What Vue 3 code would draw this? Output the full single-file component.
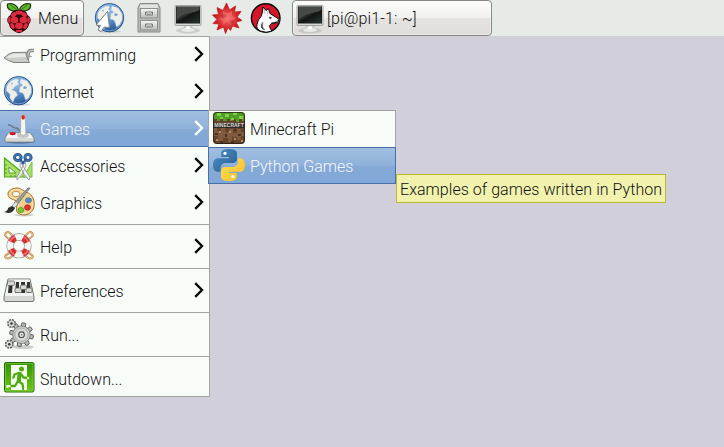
<script setup>
const menu = [
  { label: 'Programming', icon: 'trowel', sub: true },
  { label: 'Internet', icon: 'globe', sub: true },
  { label: 'Games', icon: 'joystick', sub: true, active: true },
  { label: 'Accessories', icon: 'scissors', sub: true },
  { label: 'Graphics', icon: 'palette', sub: true },
  { label: 'Help', icon: 'lifebuoy', sub: true, split: true },
  { label: 'Preferences', icon: 'faders', sub: true, split: true },
  { label: 'Run...', icon: 'gears', split: true },
  { label: 'Shutdown...', icon: 'exit', split: true },
]
const games = [
  { label: 'Minecraft Pi', icon: 'minecraft', logo: 'MINECRAFT' },
  { label: 'Python Games', icon: 'python', active: true },
]
const launchers = ['globe', 'cabinet', 'monitor', 'star', 'wolf']
const turns = [0, 45, 90, 135, 180, 225, 270, 315]
</script>

<template>
  <div class="desktop">
    <svg class="defs" aria-hidden="true">
      <defs>
        <radialGradient id="gBlue" cx=".4" cy=".25" r=".8">
          <stop offset="0" stop-color="#9cc4ea" /><stop offset=".6" stop-color="#4a80bb" /><stop offset="1" stop-color="#1f4d8c" />
        </radialGradient>
        <linearGradient id="gScreen" x1="0" y1="0" x2="1" y2="1">
          <stop offset="0" stop-color="#5c605d" /><stop offset=".4" stop-color="#303432" /><stop offset=".5" stop-color="#101211" /><stop offset="1" stop-color="#30433a" />
        </linearGradient>
        <linearGradient id="gMetal" x1="0" y1="0" x2="0" y2="1">
          <stop offset="0" stop-color="#f7f8f6" /><stop offset="1" stop-color="#babdb8" />
        </linearGradient>
        <radialGradient id="gRed">
          <stop offset="0" stop-color="#f06a68" /><stop offset=".6" stop-color="#d93032" /><stop offset="1" stop-color="#bb0d12" />
        </radialGradient>
        <linearGradient id="gExit" x1="0" y1="0" x2="0" y2="1">
          <stop offset="0" stop-color="#329400" /><stop offset="1" stop-color="#6fc719" />
        </linearGradient>
        <linearGradient id="gPyB" x1="0" y1="0" x2="1" y2="1">
          <stop offset="0" stop-color="#4b91c6" /><stop offset="1" stop-color="#285d8c" />
        </linearGradient>
        <linearGradient id="gPyY" x1="0" y1="0" x2="1" y2="1">
          <stop offset="0" stop-color="#ffe154" /><stop offset="1" stop-color="#f6bc28" />
        </linearGradient>
      </defs>

      <symbol id="raspberry" viewBox="0 0 32 32">
        <path d="M15.500 9C8 10 3.500 7 4.500 2 9 1 15 2.500 15.500 9ZM16.500 9C24 10 28.500 7 27.500 2 23 1 17 2.500 16.500 9Z" fill="#5fb52c" stroke="#1c3a0c" stroke-width="1.200" />
        <path d="M8 3.500 15 8.500M24 3.500 17 8.500" stroke="#2d6914" stroke-width=".8" />
        <path d="M16 8C19.500 7.500 24 9 24.500 13 28.500 15 28.500 20 26 22 25.500 27 20.500 30 16 31.200 11.500 30 6.500 27 6 22 3.500 20 3.500 15 7.500 13 8 9 12.500 7.500 16 8Z" fill="#2a070b" />
        <g fill="#dd2a3e">
          <ellipse cx="16" cy="10.500" rx="3.500" ry="2" /><ellipse cx="10.800" cy="12.700" rx="3.100" ry="2.200" transform="rotate(-35 10.800 12.700)" /><ellipse cx="21.200" cy="12.700" rx="3.100" ry="2.200" transform="rotate(35 21.200 12.700)" />
          <ellipse cx="11.600" cy="18" rx="3.800" ry="3.300" /><ellipse cx="20.400" cy="18" rx="3.800" ry="3.300" /><ellipse cx="16" cy="23.800" rx="3.900" ry="3.200" />
          <ellipse cx="6.400" cy="18" rx="1.300" ry="3.200" /><ellipse cx="25.600" cy="18" rx="1.300" ry="3.200" /><ellipse cx="9.500" cy="24" rx="2" ry="3.200" transform="rotate(-25 9.500 24)" /><ellipse cx="22.500" cy="24" rx="2" ry="3.200" transform="rotate(25 22.500 24)" />
          <ellipse cx="16" cy="29" rx="3.400" ry="1.300" />
        </g>
      </symbol>

      <symbol id="globe" viewBox="0 0 32 32">
        <ellipse cx="16" cy="29.500" rx="11" ry="1.500" fill="#8b9091" opacity=".3" />
        <circle cx="15.500" cy="15.700" r="14.200" fill="url(#gBlue)" stroke="#25518e" stroke-width="1" />
        <circle cx="15.500" cy="15.700" r="13.200" fill="none" stroke="#a9cbe9" stroke-width=".8" opacity=".8" />
        <path d="M4 11C6 7 9 5 13 4L16 5 14 7 16 9 12 11 10 14 8 14.500 13 17 14.500 20 11.500 23 10 27 7 23 7 19 3.500 16ZM18 4 24 6 28 12 28 18 25.500 23 22.500 25 21.500 21 20 18 16.500 17 17 12 20 10 17 8Z" fill="#eeefe9" stroke="#d2dbe0" stroke-width=".5" />
        <path d="M21 11 24 12 23 14 20 13.500ZM8 8 10 8 9 10Z" fill="#76a4cf" />
      </symbol>

      <symbol id="cabinet" viewBox="0 0 32 32">
        <path d="M7 2.500H25L27 7V31H5V7Z" fill="#b7bbb6" stroke="#858a84" />
        <path d="M7.500 3.500H24.500L25.500 7H6.500Z" fill="#e2e4e0" />
        <rect x="7.500" y="7.500" width="17" height="9.500" fill="url(#gMetal)" stroke="#8d918c" />
        <rect x="7.500" y="19.500" width="17" height="9.500" fill="url(#gMetal)" stroke="#8d918c" />
        <path d="M12.500 11H19.500V14H12.500ZM12.500 23H19.500V26H12.500Z" fill="#f6f7f5" stroke="#777b77" />
        <path d="M13 11.500Q16 15 19 11.500M13 23.500Q16 27 19 23.500" fill="none" stroke="#777b77" />
      </symbol>

      <symbol id="monitor" viewBox="0 0 32 32">
        <ellipse cx="16" cy="28.500" rx="12" ry="3" fill="#8d918c" opacity=".3" />
        <path d="M12.500 23H20L21 27H11.500Z" fill="#c6c9c4" />
        <ellipse cx="16" cy="28" rx="7.500" ry="2.500" fill="#e7e9e5" stroke="#bfc3be" stroke-width=".7" />
        <ellipse cx="16" cy="25.500" rx="2.500" ry="1.500" fill="#fff" />
        <rect x="3" y="3.500" width="26" height="20" rx="1" fill="#d6d9d4" stroke="#868b84" stroke-width=".7" />
        <rect x="4" y="4.500" width="24" height="17" fill="#161918" />
        <path d="M4.500 5H27.500V8C22 12 14 9 4.500 18Z" fill="#454a47" />
        <path d="M4.500 18C14 9 22 12 27.500 8V21H4.500Z" fill="url(#gScreen)" opacity=".7" />
      </symbol>

      <symbol id="star" viewBox="0 0 32 32">
        <path d="M15.500 1 18.500 8 24.500 4 23.500 10 30 9.500 26 15 31 18.500 25 20 28 26 21.500 24 19.500 28.500 17 25.500 14.500 31.500 12.500 25 6 28 8 22 2 21.500 6 17.500 1.500 13 7.500 12.500 6 5.500 12 8.500Z" fill="url(#gRed)" stroke="#c51c1e" stroke-width=".8" />
        <path d="M12 9 16 12 21 9 21 14 25 16 21 19 21 23 16 20 12 23 12 19 8 17 12 15Z" fill="#fa8580" opacity=".45" />
        <path d="M8 13 13 12 16 14 12 17ZM18 19 23 18 21 23Z" fill="#9e1014" opacity=".35" />
      </symbol>

      <symbol id="wolf" viewBox="0 0 32 32">
        <circle cx="15.700" cy="16" r="14.300" fill="#d5172a" stroke="#090909" stroke-width="1.400" />
        <path d="M13 5 16 8.500 18.500 6.500 20 11.500 24 14 29.500 17.500Q30 20 27.500 20.500L21.500 21.500Q18.500 23 20 26L22 29Q16 31.500 10.500 29 6 27 7 22.500 7.500 18 11 14.500 12.500 12 13 5Z" fill="#fff" stroke="#090909" stroke-width="1" stroke-linejoin="round" />
        <path d="M14.300 8V12M18 8.500 17.500 12M19 15 22 15.500 20 17ZM28 17.500H29.500V19.500H27.500ZM21 21 27.500 19.500 26 21.500 21 22ZM13 20Q11 25 15 28L12.500 27Q9.500 24 13 20Z" fill="#090909" stroke="#555" stroke-width=".4" />
      </symbol>

      <symbol id="trowel" viewBox="0 0 32 32">
        <path d="M24 23 25.500 14.500Q26 12.500 28 12.500H31" fill="none" stroke="#7e837c" stroke-width="3.500" />
        <path d="M24 23 25.500 14.500Q26 12.500 28 12.500H31" fill="none" stroke="#c7cac4" stroke-width="1.500" />
        <path d="M1 19.800Q6 15 10 14.500L23.500 14.300Q22.500 18 26.500 24.500L11 24.500Q5 23 1 19.800Z" fill="#c8cdc5" stroke="#7d827b" />
        <path d="M3 20Q8 16 12 15.800L22 15.800 23 19Z" fill="#e9ebe6" />
        <path d="M23.500 18 29 18.500" stroke="#9a9e98" />
      </symbol>

      <symbol id="joystick" viewBox="0 0 32 32">
        <ellipse cx="17" cy="29.500" rx="15" ry="2.200" fill="#1d355b" opacity=".35" />
        <path d="M5 13C9 12 9 17 14 16L17 19" fill="none" stroke="#626c78" stroke-width="1.300" />
        <path d="M5 21H27.500L31 26V30H2V26Z" fill="#d8d9d5" stroke="#70736f" stroke-width=".7" />
        <path d="M5.500 21.500H27L30 26H3Z" fill="#f4f4f1" />
        <ellipse cx="20" cy="23.500" rx="6" ry="2.300" fill="#c3c5c2" />
        <path d="M17.800 5Q18 2.300 20 2.300T22.300 5L22.800 22Q20 25 17.500 22Z" fill="#f6f6f3" stroke="#9ba09b" stroke-width=".6" />
        <rect x="18.500" y="3" width="3.300" height="4.500" rx="1.600" fill="#dd2423" />
        <ellipse cx="9.700" cy="21.600" rx="3" ry="1.700" fill="#ba1115" /><ellipse cx="9.700" cy="21" rx="2.500" ry="1.100" fill="#e02b29" />
      </symbol>

      <symbol id="scissors" viewBox="0 0 32 32">
        <path d="M1.500 9V28H25Z" fill="#a8df68" stroke="#52a61c" stroke-width="1.200" />
        <path d="M6 18V24H13Z" fill="#f8fcf9" stroke="#52a61c" />
        <path d="M20 28 29 13 29 28Z" fill="#a8df68" stroke="#78bd45" />
        <path d="M2 24H4M2 20H4M2 16H4M8 28V26M12 28V26M16 28V26" stroke="#387719" stroke-width=".7" />
        <path d="M17.500 12Q20 18 27 28L26 31Q21 27 17 17ZM22 12Q20 18 14 28L14 31Q19 27 23 17Z" fill="#f2f3f0" stroke="#8d938d" stroke-width=".8" />
        <ellipse cx="14.800" cy="8.500" rx="3.300" ry="2.900" fill="none" stroke="#244f88" stroke-width="3" />
        <ellipse cx="25" cy="8.500" rx="3.100" ry="2.900" fill="none" stroke="#244f88" stroke-width="3" />
        <ellipse cx="14.800" cy="8.500" rx="3.300" ry="2.900" fill="none" stroke="#477db9" stroke-width="1.300" />
        <ellipse cx="25" cy="8.500" rx="3.100" ry="2.900" fill="none" stroke="#477db9" stroke-width="1.300" />
        <path d="M17 10 21 15M23 10 19 15" stroke="#2c5c99" stroke-width="2" />
      </symbol>

      <symbol id="palette" viewBox="0 0 32 32">
        <ellipse cx="21" cy="29" rx="10" ry="1.500" fill="#888" opacity=".35" />
        <path d="M11 2.500C16 .5 19 4 23 6C30 8 32 15 31 21C29 29 20 31 15 27C11 24 16 18 13 15C10 13 5 13 5 8C5 5 8 3 11 2.500Z" fill="#eed08d" stroke="#ad7225" />
        <path d="M11 4C16 2 19 6 23 7.500C28 9 30 15 29.500 20C28 27 20 29 16 26C13 22 18 18 14.500 14C11 11 6 12 6.500 8Q7 5 11 4Z" fill="none" stroke="#f9e8bc" />
        <ellipse cx="13" cy="8" rx="4" ry="2.600" fill="#f9fcf9" stroke="#b98231" stroke-width=".8" />
        <ellipse cx="25.500" cy="14.300" rx="3" ry="2.500" fill="#5989c5" stroke="#2c5a99" stroke-width=".6" />
        <ellipse cx="24.500" cy="21.500" rx="3" ry="2.800" fill="#de3230" stroke="#a51316" stroke-width=".6" />
        <ellipse cx="17.800" cy="24" rx="3" ry="2.600" fill="#72c92d" stroke="#418b13" stroke-width=".6" />
        <path d="M27 2 14 19 11 17 25 2Z" fill="#98a0a0" stroke="#5a605e" stroke-width=".7" />
        <path d="M13 15 9 20 11 22 15 18Z" fill="#e2e4e3" stroke="#767c78" stroke-width=".7" />
        <path d="M9 20 12 22Q10 27 5 27L1 26Q5 25 5 22Z" fill="#2c3030" />
      </symbol>

      <symbol id="lifebuoy" viewBox="0 0 32 32">
        <path d="M8 10Q0 6 3 3T10 7M24 10Q32 6 29 3T22 7M8 22Q0 26 3 28T10 25M24 22Q32 26 29 28T22 25" fill="none" stroke="#bd823f" stroke-width="2" />
        <path d="M8 10Q0 6 3 3T10 7M24 10Q32 6 29 3T22 7M8 22Q0 26 3 28T10 25M24 22Q32 26 29 28T22 25" fill="none" stroke="#f4d5a0" stroke-width=".8" />
        <circle cx="16" cy="15.800" r="8.800" fill="none" stroke="#8c928f" stroke-width="7.400" />
        <circle cx="16" cy="15.800" r="8.800" fill="none" stroke="#f3f4f2" stroke-width="6.200" />
        <circle cx="16" cy="15.800" r="8.800" fill="none" stroke="#dd2b2b" stroke-width="6.200" stroke-dasharray="6.400 7.423" stroke-dashoffset="-3.700" />
        <circle cx="16" cy="15.800" r="10" fill="none" stroke="#fff" stroke-width="1.500" opacity=".35" />
      </symbol>

      <symbol id="faders" viewBox="0 0 32 32">
        <path d="M5 5H27L31 23V26Q31 27.500 29 27.500H3Q1 27.500 1 26V23Z" fill="#d5d7d2" stroke="#737771" />
        <path d="M5.500 5.500H26.500L30 22H2Z" fill="#f2f3f0" />
        <path d="M6 8H10L9 19H5ZM13 8H16V19H12ZM18 8H22V19H18ZM24 8H27L28 19H24Z" fill="#30342f" />
        <g fill="#d6d8d2" stroke="#62665f" stroke-width=".8">
          <rect x="4.500" y="7" width="7" height="4.500" rx="1" /><rect x="12" y="14" width="6.500" height="4.500" rx="1" /><rect x="17.500" y="11" width="6" height="4.500" rx="1" /><rect x="23" y="14" width="6" height="4.500" rx="1" />
        </g>
      </symbol>

      <symbol id="gears" viewBox="0 0 32 32">
        <ellipse cx="20" cy="29" rx="11" ry="2" fill="#777" opacity=".35" />
        <g fill="#b9bdb8" stroke="#565b56" stroke-width=".9">
          <rect v-for="t in turns" :key="t" x="16.500" y="4.800" width="4" height="6" rx=".7" :transform="`rotate(${t + 12} 18.500 16.700)`" />
        </g>
        <circle cx="18.500" cy="16.700" r="8.800" fill="#c6cac5" stroke="#656a65" stroke-width=".7" />
        <circle cx="18.500" cy="16.700" r="6.500" fill="#d9dbd7" stroke="#9da19c" stroke-width=".7" />
        <circle cx="18.500" cy="16.700" r="2.800" fill="#f9fbf8" stroke="#474c48" stroke-width="1.200" />
        <circle cx="18.500" cy="16.700" r="1" fill="#7b807b" />
        <g fill="#d7dad5" stroke="#5b605b" stroke-width="1.500">
          <circle cx="8.500" cy="5.500" r="3.700" stroke-dasharray="2 .9" /><circle cx="6.300" cy="26.200" r="3.700" stroke-dasharray="2 .9" />
        </g>
        <circle cx="8.500" cy="5.500" r="1.300" fill="#353a35" /><circle cx="6.300" cy="26.200" r="1.300" fill="#353a35" />
      </symbol>

      <symbol id="exit" viewBox="0 0 32 32">
        <rect x="1.500" y=".5" width="29.500" height="29.500" rx="1.500" fill="url(#gExit)" stroke="#286c08" />
        <rect x="2.500" y="1.500" width="27.500" height="27.500" rx="1" fill="none" stroke="#86cf48" stroke-width=".7" />
        <path d="M8 3H24V28H8Z" fill="#f4fbef" />
        <circle cx="18.500" cy="7" r="2.500" fill="#4fab13" />
        <path d="M15.500 11 11.500 12.500 10 16.500M18 12 20.500 15.500 24 16M16 13 15 19 19.500 22 20.500 28M15 19 12 24 6 24" fill="none" stroke="#4fab13" stroke-width="2.300" stroke-linejoin="round" />
        <path d="M15 10H18.500L18 20 13.800 19Z" fill="#4fab13" />
        <path d="M24.300 15.700 26 16.500M7.500 24H4.500V26M21 27H24" fill="none" stroke="#f4fbef" stroke-width="2" />
      </symbol>

      <symbol id="minecraft" viewBox="0 0 32 32">
        <rect width="32" height="32" rx="4" fill="#65432b" />
        <path d="M0 16H4V19H8V16H12V20H16V17H20V21H24V17H28V20H32V24H28V28H24V25H19V30H15V26H10V29H5V24H0Z" fill="#805a3d" />
        <path d="M2 21H5V23H2ZM12 22H14V25H12ZM25 22H28V24H25ZM18 29H21V32H18ZM7 29H10V32H7ZM21 17H23V19H21Z" fill="#463020" />
        <path d="M6 19H8V21H6ZM16 19H18V21H16ZM28 28H30V30H28ZM3 27H5V29H3ZM21 26H23V28H21Z" fill="#b18b66" />
        <path d="M4 0H28Q32 0 32 4V9H29V7H26V10H23V7H20V9H17V7H14V9H10V6H7V9H4V7H0V4Q0 0 4 0Z" fill="#4c9e26" />
        <path d="M4 1H8V4H4ZM12 2H16V5H12ZM20 0H24V3H20ZM26 4H30V7H26ZM7 5H10V7H7ZM18 6H21V8H18Z" fill="#82d243" />
        <path d="M1 11H31V16H1Z" fill="#302c29" />
        <rect x=".5" y=".5" width="31" height="31" rx="3.500" fill="none" stroke="#29201a" stroke-width=".8" />
      </symbol>

      <symbol id="python" viewBox="0 0 32 32">
        <path d="M15.800 0C11 0 8.200 1.200 8.200 4V8H16V9.200H5C1.800 9.200 0 12 0 16S1.800 22.800 5 22.800H7.500V19C7.500 16 10 14 12.500 14H20C22.500 14 24 12 24 10V4C24 1.500 21 0 15.800 0Z" fill="url(#gPyB)" />
        <path d="M16.200 32C21 32 23.800 30.800 23.800 28V24H16V22.800H27C30.200 22.800 32 20 32 16S30.200 9.200 27 9.200H25V13C25 16 22 18 19.500 18H12C9.500 18 8 20 8 22V28C8 30.500 11 32 16.200 32Z" fill="url(#gPyY)" />
        <circle cx="12" cy="4.300" r="1.600" fill="#fff" /><circle cx="20" cy="27.700" r="1.600" fill="#fff" />
      </symbol>
    </svg>

    <header class="panel">
      <button class="menu-button">
        <svg class="icon"><use href="#raspberry" /></svg>
        <span>Menu</span>
      </button>
      <nav class="launchers">
        <svg v-for="name in launchers" :key="name" class="icon"><use :href="'#' + name" /></svg>
      </nav>
      <button class="task">
        <svg class="icon"><use href="#monitor" /></svg>
        <span>[pi@pi1-1: ~]</span>
      </button>
    </header>

    <ul class="menu main-menu">
      <template v-for="item in menu" :key="item.label">
        <li v-if="item.split" class="separator"></li>
        <li class="item" :class="{ active: item.active }">
          <svg class="icon"><use :href="'#' + item.icon" /></svg>
          <span>{{ item.label }}</span>
          <svg v-if="item.sub" class="arrow" viewBox="0 0 10 16"><path d="M1.200 1.200 8 8 1.200 14.800" /></svg>
        </li>
      </template>
    </ul>

    <ul class="menu sub-menu">
      <li v-for="item in games" :key="item.label" class="item" :class="{ active: item.active }">
        <svg class="icon"><use :href="'#' + item.icon" /></svg>
        <b v-if="item.logo" class="logo">{{ item.logo }}</b>
        <span>{{ item.label }}</span>
      </li>
    </ul>

    <div class="tooltip">Examples of games written in Python</div>

    <svg class="cursor" viewBox="0 0 18 24">
      <path d="M13.500 1.500 15.500 17.500 10 17 7 21.500 4 20 6.500 15.500 2 15Z" />
    </svg>
  </div>
</template>

<style>
body {
  background: #d0cfda;
}
</style>

<style scoped>
.desktop {
  position: relative;
  width: 724px;
  height: 447px;
  overflow: hidden;
  background: #d0cfda;
  color: #111;
  font: 300 16px/20px Roboto, sans-serif;
}
.defs {
  position: absolute;
  width: 0;
  height: 0;
}
.icon {
  display: block;
  flex: none;
  width: 32px;
  height: 32px;
}
.logo {
  position: absolute;
  left: 6px;
  top: 12px;
  width: 30px;
  color: #dedbd5;
  font: 700 5px/7px "Liberation Sans", sans-serif;
  text-align: center;
}
.panel {
  display: flex;
  height: 36px;
  background: #e6ebe7;
}
button {
  display: flex;
  box-sizing: border-box;
  height: 36px;
  margin: 0;
  padding: 0;
  border: 1px solid #8b8784;
  border-radius: 4px;
  background: linear-gradient(#fcfcfb, #f0f0ee 50%, #e5e4e2 51%, #dfdddb);
  box-shadow: inset 0 0 0 1px #ffffff66;
  color: inherit;
  font: inherit;
}
.menu-button {
  width: 84px;
  padding: 1px 0 0 2px;
}
.menu-button span {
  margin-left: 3px;
  line-height: 33px;
  letter-spacing: 0.2px;
}
.launchers {
  display: flex;
  gap: 7px;
  padding: 2px 10px;
}
.launchers .icon:nth-child(2) {
  margin-top: -1px;
}
.task {
  width: 200px;
  padding: 1px 0 0 1px;
}
.task span {
  margin-left: 1px;
  line-height: 33px;
  letter-spacing: 0.15px;
}
.menu {
  position: absolute;
  margin: 0;
  padding: 0;
  list-style: none;
  background: #f8fcf9;
}
.main-menu {
  left: 0;
  top: 36px;
  width: 210px;
  box-shadow: inset -1px 1px #a3a3a3, inset 0 -1px #a3a3a3;
}
.sub-menu {
  left: 208px;
  top: 110px;
  width: 188px;
  box-shadow: inset 0 0 0 1px #a3a3a3;
}
.item {
  display: flex;
  box-sizing: border-box;
  height: 37px;
  padding: 2px 6px 0 3px;
}
.sub-menu .item {
  padding-left: 5px;
}
.item span {
  flex: 1;
  margin-left: 5px;
  line-height: 36px;
}
.item.active {
  background: linear-gradient(#a2bfe1, #8fb1da 50%, #86a9d5 51%, #7fa8da);
  box-shadow: inset 0 1px #4770a8, inset 0 -1px #4770a8;
  color: #f5f8fc;
}
.sub-menu .item.active {
  box-shadow: inset 0 0 0 1px #4770a8;
}
.separator {
  height: 7px;
  box-sizing: border-box;
  padding: 3px 0;
}
.separator::before {
  content: "";
  display: block;
  height: 1px;
  background: #a3a3a3;
}
.arrow {
  width: 10px;
  height: 16px;
  margin-top: 8px;
  fill: none;
  stroke: #0b0b0b;
  stroke-width: 2.4;
}
.active .arrow {
  stroke: #fff;
}
.tooltip {
  position: absolute;
  left: 396px;
  top: 174px;
  box-sizing: border-box;
  width: 270px;
  height: 29px;
  padding-left: 3px;
  border: 1px solid #b9b92f;
  background: #f0f2ae;
  line-height: 29px;
  letter-spacing: 0.05px;
  white-space: nowrap;
}
.cursor {
  position: absolute;
  left: 94px;
  top: 10px;
  width: 18px;
  height: 24px;
  fill: #fff;
  stroke: #7d8790;
  stroke-width: 1;
}
</style>
